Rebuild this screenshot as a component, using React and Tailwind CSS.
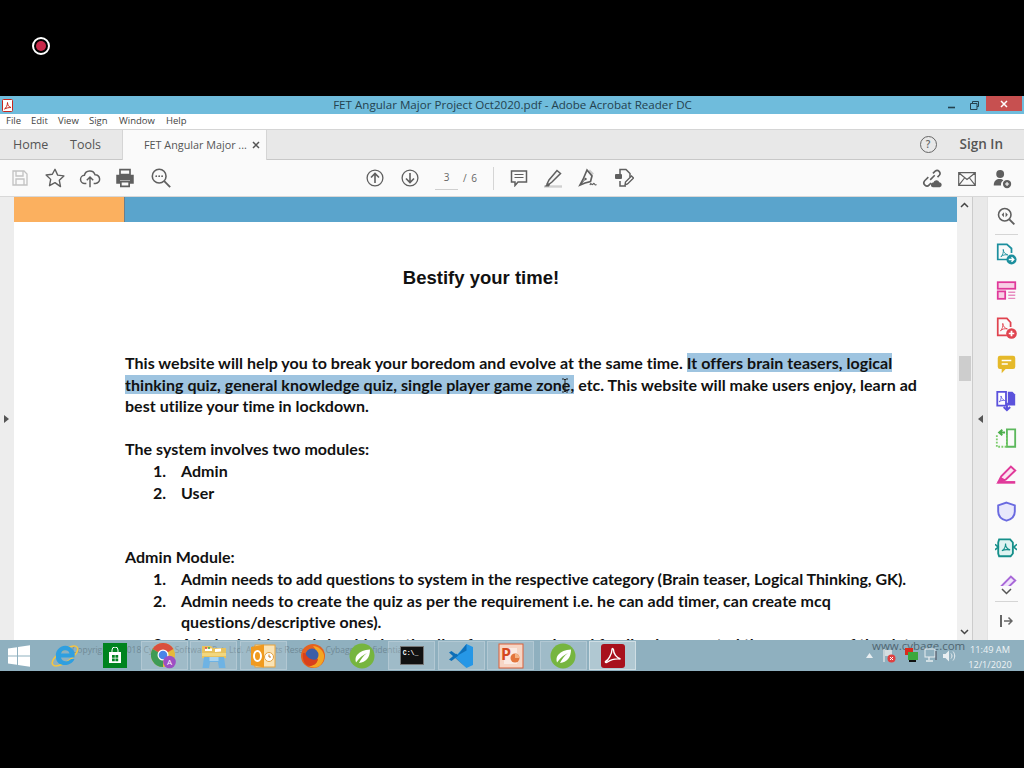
import React from "react";

const ui = { fontFamily: '"Open Sans", "Noto Sans", sans-serif' };
const doc = { fontFamily: 'Lato, "Open Sans", sans-serif' };

function Svg({ s = 22, children, className = "", vb = "0 0 24 24" }) {
  return (
    <svg width={s} height={s} viewBox={vb} fill="none" className={className}>
      {children}
    </svg>
  );
}
const G = "#5f5f5f";

const IconSave = () => (
  <Svg s={18} vb="0 0 18 18"><path d="M2 2h11l3 3v11H2z M5 2v5h7V2 M5 16v-6h8v6" stroke="#c2c2c2" strokeWidth="1.3" /></Svg>
);
const IconStar = () => (
  <Svg s={22}><path d="M12 2.5l2.9 6.4 6.8.8-5 4.8 1.3 6.9L12 17l-6 3.4 1.3-6.9-5-4.8 6.8-.8z" stroke={G} strokeWidth="1.5" strokeLinejoin="round" /></Svg>
);
const IconCloud = () => (
  <Svg s={22}><path d="M8 18H6.5a4.5 4.5 0 0 1-.6-9A6 6 0 0 1 17.5 8.5 4.7 4.7 0 0 1 18 18h-2" stroke={G} strokeWidth="1.6" /><path d="M12 22V11M8.5 14.5 12 11l3.5 3.5" stroke={G} strokeWidth="1.6" /></Svg>
);
const IconPrint = () => (
  <Svg s={20}><path d="M6 2h12v6H6z" stroke={G} strokeWidth="2" /><path d="M1.5 8h21v11H18v-4H6v4H1.5z" fill={G} /><path d="M7 16.5h10V22H7z" stroke={G} strokeWidth="2" /></Svg>
);
const IconFind = () => (
  <Svg s={22}><circle cx="10" cy="10" r="7.5" stroke={G} strokeWidth="1.7" /><path d="M15.5 15.5 22 22" stroke={G} strokeWidth="2" /><circle cx="6.8" cy="10" r="1" fill={G} /><circle cx="10" cy="10" r="1" fill={G} /><circle cx="13.2" cy="10" r="1" fill={G} /></Svg>
);
const IconUp = () => (
  <Svg s={18} vb="0 0 18 18"><circle cx="9" cy="9" r="7.9" stroke={G} strokeWidth="1.3" /><path d="M9 14V4.5M5 8.5l4-4 4 4" stroke={G} strokeWidth="1.6" /></Svg>
);
const IconDown = () => (
  <Svg s={18} vb="0 0 18 18"><circle cx="9" cy="9" r="7.9" stroke={G} strokeWidth="1.3" /><path d="M9 4v9.5M5 9.5l4 4 4-4" stroke={G} strokeWidth="1.6" /></Svg>
);
const IconComment = () => (
  <Svg s={18} vb="0 0 18 18"><path d="M1.5 2h15v11H8l-3 3.5V13H1.5z" stroke={G} strokeWidth="1.5" /><path d="M4.5 5.5h9M4.5 8.5h9" stroke={G} strokeWidth="1.2" /></Svg>
);
const IconHighlight = () => (
  <Svg s={20} vb="0 0 20 20"><path d="M1 18.5h18" stroke="#d0d0d0" strokeWidth="2.4" /><path d="M4 16l2-4L14 2.5 17.5 5.5 9 14l-4 3z" fill="#f4f4f4" stroke={G} strokeWidth="1.5" /><path d="M1.5 18.5 5 15l2 1.5-1 2z" fill={G} /></Svg>
);
const IconSign = () => (
  <Svg s={20} vb="0 0 20 20"><path d="M11 2.500l4 4" stroke="#ccc" strokeWidth="2.500" /><path d="M9 2l5 6-1.500 5.500L7 15l-5 2 3-5.500z" stroke={G} strokeWidth="1.700" /><path d="M2 17l5-5.500" stroke={G} /><circle cx="7.500" cy="11" r="1.200" fill={G} /><path d="M12 17c1-3 1.500 0 2.500-.5s1-2 2-.5 1 1 2 .5" stroke={G} strokeWidth="1.200" /></Svg>
);
const IconForm = () => (
  <Svg s={20} vb="0 0 20 20"><path d="M6 6V1.500h6l4 4V9M6 13v5h6" stroke={G} strokeWidth="1.500" /><rect x="1" y="6" width="7" height="5" rx="1" fill={G} /><path d="M11 17l.5-3 6-6 2 2-6 6z" fill="#fff" stroke={G} strokeWidth="1.400" /></Svg>
);
const IconLink = () => (
  <Svg s={22}><path d="M10 14l5-5M8 11l-4 4a3.200 3.200 0 0 0 5 4.500l2-2M13 7l2.500-2.500a3.200 3.200 0 0 1 4.500 4.500L18 11" stroke={G} strokeWidth="1.700" /><path d="M13 22a2.500 2.500 0 0 1 .5-5 3.500 3.500 0 0 1 6.500-.5 2.800 2.800 0 0 1 .5 5.500z" fill={G} /></Svg>
);
const IconMail = () => (
  <Svg s={18} vb="0 0 18 16"><path d="M.7 1.700h16.600v12.600H.7z M.7 1.700 9 8.500l8.300-6.800M.7 14.300 6.500 7M17.300 14.300 11.500 7" stroke={G} strokeWidth="1.200" /></Svg>
);
const IconUserAdd = () => (
  <Svg s={22}><circle cx="10" cy="6.500" r="4.300" fill={G} /><path d="M3 19c0-5 3-7 6.500-7 2 0 3 .5 4 1.500-2 1-3 3-2.500 5.500z" fill={G} /><circle cx="17.500" cy="17.500" r="4.500" fill={G} /><path d="M15.300 17.500h4.400M17.500 15.300v4.400" stroke="#fff" strokeWidth="1.200" /></Svg>
);

const RightIcons = {
  zoom: (
    <Svg s={20}><circle cx="10.500" cy="10.500" r="7.500" stroke={G} strokeWidth="1.900" /><path d="M16 16l6 6" stroke={G} strokeWidth="2.300" /><path d="M9.500 7.500 6.800 10.500l2.700 3zM11.500 7.500l2.700 3-2.700 3z" fill={G} /></Svg>
  ),
  exportPdf: (
    <Svg s={22}><path d="M14 18H3V1.500h10l5 4.500v5" stroke="#1c8f9e" strokeWidth="1.900" /><path d="M6.500 15c2-2 3-5 2.500-8 0 3 2 5 5 6-3-.5-5.500 0-7.500 2z" stroke="#1c8f9e" strokeWidth="1" /><circle cx="18" cy="18" r="5.500" fill="#1c8f9e" /><path d="M15 18h5.500M18 15.500l2.500 2.500-2.500 2.500" stroke="#fff" strokeWidth="1.500" /></Svg>
  ),
  organize: (
    <Svg s={21}><rect x="2" y="2.500" width="20" height="7.500" stroke="#e0399a" strokeWidth="2" fill="#f8cfe5" /><rect x="2" y="13" width="8.500" height="8.500" stroke="#e0399a" strokeWidth="2" fill="#f8cfe5" /><path d="M14 14h8M14 17.500h8M14 21h8" stroke="#e78bc0" strokeWidth="1.600" /></Svg>
  ),
  create: (
    <Svg s={22}><path d="M13 20H3V1.500h10l4 4.500v5" stroke="#e0434f" strokeWidth="1.900" /><path d="M6 15c2-2 3-5 2.500-8 0 3 2 5 5 6-3-.5-5.500 0-7.500 2z" stroke="#e0434f" strokeWidth="1" /><circle cx="18" cy="18" r="5.800" fill="#e0434f" /><path d="M15 18h6M18 15v6" stroke="#fff" strokeWidth="1.900" /></Svg>
  ),
  comment: (
    <Svg s={21}><path d="M4.500 2h15A2.500 2.500 0 0 1 22 4.500v10a2.500 2.500 0 0 1-2.500 2.500H11l-4.500 5v-5h-2A2.500 2.500 0 0 1 2 14.500v-10A2.500 2.500 0 0 1 4.500 2z" fill="#e5b92a" /><path d="M6.500 7.500h11M6.500 11.500h7" stroke="#fff" strokeWidth="1.800" /></Svg>
  ),
  combine: (
    <Svg s={22}><path d="M12 2H2.500v15H12z" fill="#fff" stroke="#5b52dc" strokeWidth="2" /><path d="M14 2h5l3 3v12h-8z" fill="#5b52dc" /><path d="M4.500 13c2-2 2.500-4 2-6.500.5 2 2 4 4 5-2-.5-4 0-6 1.500z" stroke="#5b52dc" strokeWidth=".9" /><path d="M13 14v7M9.500 18.500 13 22l3.500-3.500" stroke="#5b52dc" strokeWidth="2.200" /></Svg>
  ),
  compress: (
    <Svg s={22}><path d="M13 2.500h9v19h-9z" stroke="#5cb85c" strokeWidth="2" /><path d="M2 9v12.500h11V9" stroke="#7ccc6c" strokeWidth="2" strokeDasharray="2 1.500" /><path d="M11 6H5M8 3 4.500 6 8 9" stroke="#4cae4c" strokeWidth="2.100" /></Svg>
  ),
  fill: (
    <Svg s={21}><path d="M2 21h20" stroke="#e0399a" strokeWidth="3" /><path d="M2.500 21 6 14 17 3l5 4.500L11 18z" fill="#fbe3f0" stroke="#e0399a" strokeWidth="2.200" /><path d="M3 20.500 6 15l5 3z" fill="#e0399a" /></Svg>
  ),
  protect: (
    <Svg s={21}><path d="M12 1.800 21.500 5v7c0 5.500-4 9-9.500 10.500C6.500 21 2.500 17.500 2.500 12V5z" fill="#e8e8fb" stroke="#6a6ae0" strokeWidth="2.200" /></Svg>
  ),
  print: (
    <Svg s={22}><path d="M4.500 2.500h12l3 3.500v12l-2.500 3h-12.500l-1-3V6z" fill="#dff3f1" stroke="#158f8a" strokeWidth="2" /><path d="M7.500 15c2.500-1.500 4-4.500 4-8 0 3.500 2 6 5 7-3.500-.5-6.500-.500-9 1z" stroke="#158f8a" strokeWidth="1.200" /><path d="M0 8l3.500 3L0 14M24 8l-3.500 3L24 14" stroke="#158f8a" strokeWidth="1.700" /></Svg>
  ),
  more: (
    <Svg s={21}><path d="M2 21h20" stroke="#a868d8" strokeWidth="3" /><path d="M2.500 21 6 14 17 3l5 4.500L11 18z" fill="#f0e3fb" stroke="#a868d8" strokeWidth="2.200" /></Svg>
  ),
};

function Toolbar() {
  return (
    <div className="relative flex h-[37px] items-center border-b border-[#d8d8d8] bg-[#fafafa]">
      <div className="ml-[10px] flex w-[19px] justify-center"><IconSave /></div>
      <div className="ml-[15px] flex w-[22px] justify-center"><IconStar /></div>
      <div className="ml-[13px] flex w-[22px] justify-center"><IconCloud /></div>
      <div className="ml-[13px] flex w-[22px] justify-center"><IconPrint /></div>
      <div className="ml-[14px] flex w-[22px] justify-center"><IconFind /></div>
      <div className="ml-[194px] flex w-[18px] justify-center"><IconUp /></div>
      <div className="ml-[17px] flex w-[18px] justify-center"><IconDown /></div>
      <div className="ml-[16px] flex h-[23px] w-[23px] items-center justify-center border-b border-[#cfcfcf] text-[10px] text-[#666]" style={ui}>3</div>
      <div className="ml-[5px] text-[10px] tracking-[1px] text-[#666]" style={ui}>/ 6</div>
      <div className="ml-[15px] h-[23px] w-px bg-[#d5d5d5]" />
      <div className="ml-[16px] flex w-[18px] justify-center"><IconComment /></div>
      <div className="ml-[15px] flex w-[20px] justify-center"><IconHighlight /></div>
      <div className="ml-[15px] flex w-[20px] justify-center"><IconSign /></div>
      <div className="ml-[16px] flex w-[20px] justify-center"><IconForm /></div>
      <div className="ml-auto mr-[81px] flex w-[22px] justify-center"><IconLink /></div>
      <div className="absolute right-[48px] top-[10px]"><IconMail /></div>
      <div className="absolute right-[11px] top-[8px]"><IconUserAdd /></div>
    </div>
  );
}

function Page() {
  const line = "whitespace-nowrap";
  return (
    <div className="h-[443px] w-[943px] overflow-hidden bg-white" style={doc}>
      <div className="flex h-[25px]">
        <div className="w-[110px] bg-[#fbb05f]" />
        <div className="w-px bg-[#6b7f8c]" />
        <div className="flex-1 bg-[#5aa4cc]" />
      </div>
      <h1 className="mt-[45px] w-[934px] text-center text-[18.500px] font-bold leading-[22px] text-[#111]" style={{ fontFamily: '"Liberation Sans", sans-serif' }}>
        Bestify your time!
      </h1>
      <div className="ml-[111px] mt-[63px] text-[16px] font-bold leading-[21.600px] tracking-[0.04px] text-[#111]">
        <p className={line}>
          This website will help you to break your boredom and evolve at the same time.{" "}
          <span className="bg-[#9ec4e0]">It offers brain teasers, logical</span>
        </p>
        <p className={line}>
          <span className="bg-[#9ec4e0]">thinking quiz, general knowledge quiz, single player game zone,</span> etc. This website will make users enjoy, learn ad
        </p>
        <p className={line}>best utilize your time in lockdown.</p>
        <p className="h-[21.600px]" />
        <p className={line}>The system involves two modules:</p>
        <ol>
          {["Admin", "User"].map((t, i) => (
            <li key={t} className="flex">
              <span className="ml-[28px] w-[28px]">{i + 1}.</span>
              <span>{t}</span>
            </li>
          ))}
        </ol>
        <p className="h-[43.200px]" />
        <p className={line}>Admin Module:</p>
        <ol>
          <li className="flex whitespace-nowrap">
            <span className="ml-[28px] w-[28px]">1.</span>
            <span className="tracking-[-0.03px]">Admin needs to add questions to system in the respective category (Brain teaser, Logical Thinking, GK).</span>
          </li>
          <li className="flex">
            <span className="ml-[28px] w-[28px]">2.</span>
            <span className="w-[680px]">Admin needs to create the quiz as per the requirement i.e. he can add timer, can create mcq questions/descriptive ones).</span>
          </li>
          <li className="flex whitespace-nowrap">
            <span className="ml-[28px] w-[28px]">3.</span>
            <span>Admin decides and should give timeline for every quiz and feedback generated the summary of the data</span>
          </li>
        </ol>
      </div>
    </div>
  );
}

function Scrollbar() {
  return (
    <div className="flex h-[443px] w-[16px] flex-col items-center border-r border-[#cccccc] bg-[#f0f0f0]">
      <svg width="9" height="6" viewBox="0 0 9 6" className="mt-[5px]"><path d="M1 5l3.500-3.500L8 5" stroke="#444" strokeWidth="1.500" fill="none" /></svg>
      <div className="mt-[148px] h-[25px] w-[12px] bg-[#cdcdcd]" />
      <svg width="9" height="6" viewBox="0 0 9 6" className="mt-auto mb-[5px]"><path d="M1 1l3.500 3.500L8 1" stroke="#444" strokeWidth="1.500" fill="none" /></svg>
    </div>
  );
}

function RightPanel() {
  const k = RightIcons;
  const rows = [k.exportPdf, k.organize, k.create, k.comment, k.combine, k.compress, k.fill, k.protect, k.print, k.more];
  return (
    <div className="relative flex h-[443px] flex-1 flex-col items-center overflow-hidden border-l border-[#e2e2e2] bg-[#fafafa]">
      <div className="mt-[9px] flex h-[20px] items-center">{k.zoom}</div>
      <div className="mt-[8px] h-px w-[23px] bg-[#d5d5d5]" />
      <div className="mt-[9px] flex flex-col items-center gap-[16.750px]">
        {rows.map((r, i) => (
          <div key={i} className="flex h-[20px] items-center">{r}</div>
        ))}
      </div>
      <div className="absolute bottom-0 left-0 flex h-[54px] w-full flex-col items-center bg-[#fafafa]">
        <svg width="11" height="7" viewBox="0 0 11 7" className="mt-[2px]"><path d="M1 1l4.500 4.500L10 1" stroke="#555" strokeWidth="1.500" fill="none" /></svg>
        <div className="mt-[6px] h-px w-[23px] bg-[#d5d5d5]" />
        <svg width="14" height="14" viewBox="0 0 14 14" className="mt-[12px]"><path d="M2 1v12" stroke="#666" strokeWidth="2" /><path d="M5 7h8M9.500 3.500 13 7l-3.500 3.500" stroke="#666" strokeWidth="1.500" fill="none" /></svg>
      </div>
    </div>
  );
}

const TaskIcons = {
  ie: (
    <svg width="34" height="32" viewBox="0 0 34 32"><ellipse cx="17" cy="16" rx="15" ry="6" transform="rotate(-35 17 16)" fill="none" stroke="#f4c542" strokeWidth="1.600" /><path d="M8 17.500a9.500 9.500 0 1 1 18.500 0H13c.5 4 6 5.500 10 1.500h3.500C23 27.500 8 27 8 17.500zM13 13.500h8.500c-.5-4.500-7.500-4.500-8.500 0z" fill="#2f9fe0" /></svg>
  ),
  store: (
    <div className="flex h-[25px] w-[24px] items-center justify-center bg-[#00831f]">
      <svg width="14" height="17" viewBox="0 0 14 17"><path d="M4 5V3a3 3 0 0 1 6 0v2" stroke="#fff" fill="none" /><path d="M1 5h12v11H1z" fill="#fff" /><path d="M4 8h2.800v2.800H4zM7.400 8h2.800v2.800H7.400zM4 11.400h2.800v2.800H4zM7.400 11.400h2.800v2.800H7.400z" fill="#00831f" /></svg>
    </div>
  ),
  chrome: (
    <svg width="26" height="26" viewBox="0 0 26 26"><circle cx="12" cy="12" r="12" fill="#e6b93a" /><path d="M12 12 1.600 6A12 12 0 0 1 22.400 6z" fill="#d9503f" /><path d="M12 12 1.600 6A12 12 0 0 0 12 24z" fill="#3f9b55" /><circle cx="12" cy="12" r="5.500" fill="#fff" /><circle cx="12" cy="12" r="4.300" fill="#4a84e8" /><circle cx="18.500" cy="19" r="6.300" fill="#9d4fc4" /><text x="18.500" y="22" textAnchor="middle" fontSize="8" fill="#fff" fontFamily="Open Sans">A</text></svg>
  ),
  folder: (
    <svg width="26" height="26" viewBox="0 0 26 26"><path d="M1 3h9l2 2h13v10H1z" fill="#e8c25e" /><path d="M4 5.500h7v2.500H4zM14 6l6-.5v3l-6 .5z" fill="#fff" /><circle cx="5" cy="5" r="1" fill="#d44" /><circle cx="8" cy="5" r="1" fill="#4a4" /><path d="M1 10h24v3H1z" fill="#f2d77f" /><path d="M3 14h20l1.500 11H18l-1-6H9l-1 6H1.500z" fill="#6eb3e4" /><path d="M8.500 14h9v4h-9z" fill="#a9d4f0" /></svg>
  ),
  outlook: (
    <svg width="26" height="26" viewBox="0 0 26 26"><rect x="5" y="2" width="20" height="22" fill="#fae3b5" stroke="#e7a33c" /><path d="M1 4 14 1.500v23L1 22z" fill="#f09a1f" /><ellipse cx="7.500" cy="13" rx="3.500" ry="5" fill="none" stroke="#fff" strokeWidth="2" /><circle cx="19" cy="14" r="4.500" fill="#fff" stroke="#e0a040" /><path d="M19 11.500V14h2" stroke="#c77a20" fill="none" /></svg>
  ),
  firefox: (
    <svg width="26" height="26" viewBox="0 0 26 26"><circle cx="13" cy="13" r="12" fill="#e4611f" /><path d="M13 3c5 0 10 4 11 9 .5 6-3 12-9 12.500-3 .3-6-1-7.500-3 3 1 7 .500 9-2 2-3 1-6-1-8-1 1-3 1-4 0 1-1 1-3 1-4 1 1 3 1 3-1 0-1-1.500-2-2.500-3.500z" fill="#f5a623" /><circle cx="12" cy="12" r="6.500" fill="#3b5ea8" /><path d="M5 10c3 6 7 8 13 6-1 5-5 7-8 7C5 23 2 17 3 10z" fill="#d8401c" /></svg>
  ),
  spring: (
    <svg width="26" height="26" viewBox="0 0 26 26"><circle cx="13" cy="13" r="12.500" fill="#76b53f" /><path d="M7 19.500c-2-6 2-12 14-13 0 8-4 13-11 13.500 2-4 4-7 8-10-4 2-8 5-11 9.500z" fill="#fff" /></svg>
  ),
  cmd: (
    <div className="flex h-[19px] w-[24px] flex-col border border-[#777] bg-[#111] px-[2px] text-[6.500px] font-bold leading-[9px] text-white" style={{ fontFamily: '"Liberation Mono", monospace' }}>
      <span className="mt-[2px]">C:\_</span>
    </div>
  ),
  vscode: (
    <svg width="26" height="26" viewBox="0 0 26 26"><path d="M18.500 1 25 4v18l-6.500 3L7 14z" fill="#2697e6" /><path d="M18.500 1v6.500L7 14l11.500 11-4-3.500L1 9.500 3.500 8l6 4.500z" fill="#0f6fb8" /><path d="M1 16.500 3.500 18l7-5.500-2.500-2z" fill="#0f6fb8" /></svg>
  ),
  ppt: (
    <svg width="26" height="26" viewBox="0 0 26 26"><rect x="1" y="1" width="24" height="24" fill="#f7d5c4" stroke="#d9603a" /><path d="M6 5h13v16H6z" fill="#fff" opacity=".5" /><text x="3" y="17" fontSize="16" fontWeight="700" fill="#d5491f" fontFamily="Open Sans">P</text><circle cx="17" cy="15" r="4.500" fill="#e3753c" /><path d="M17 15V10.500a4.500 4.500 0 0 1 4.500 4.500z" fill="#f4b183" /></svg>
  ),
  acrobat: (
    <div className="flex h-[24px] w-[24px] items-center justify-center rounded-[3px] bg-[#a8111c]">
      <svg width="18" height="17" viewBox="0 0 18 17"><path d="M1.500 14.500C4 13.500 8 7 8 2.500c0-1.500 1.500-1 1.500.3 0 4 3 8 7 9.200-5-.5-9.500.5-13 3-1.500 1-2.500 0-2-.5z" fill="none" stroke="#fff" strokeWidth="1.400" /></svg>
    </div>
  ),
};

function TaskItem({ children, running, active, className = "" }) {
  return (
    <div className={`flex h-[31px] w-[49.500px] items-center justify-center py-[1px] ${className}`}>
      <div className={`flex h-[29px] w-[47px] items-center justify-center ${running ? (active ? "border border-white/40 bg-white/30" : "border border-white/20 bg-white/15") : ""}`}>
        {children}
      </div>
    </div>
  );
}

function Taskbar() {
  const t = TaskIcons;
  return (
    <div className="relative flex h-[31px] bg-[#8fb0bf]">
      <div className="absolute left-[72px] top-[4px] whitespace-nowrap text-[8.500px] text-[#6f8a96]" style={ui}>
        Copyright © 2018 Cybage Software Pvt. Ltd. All Rights Reserved. Cybage Confidential.
      </div>
      <div className="absolute left-[872px] top-[-3px] whitespace-nowrap text-[11.500px] text-[#4f6672]" style={ui}>www.cybage.com</div>

      <div className="relative flex w-[40.500px] items-center justify-center pr-[3px]">
        <svg width="22" height="22" viewBox="0 0 22 22"><path d="M0 3.500 9 2.200v8.200H0zM10 2 22 .3v10.100H10zM0 11.500h9v8.300L0 18.500zM10 11.500h12V21.700L10 20z" fill="#fff" /></svg>
      </div>
      <div className="relative flex">
        <TaskItem>{t.ie}</TaskItem>
        <TaskItem>{t.store}</TaskItem>
        <TaskItem running>{t.chrome}</TaskItem>
        <TaskItem running>{t.folder}</TaskItem>
        <TaskItem running>{t.outlook}</TaskItem>
        <TaskItem>{t.firefox}</TaskItem>
        <TaskItem>{t.spring}</TaskItem>
        <TaskItem running>{t.cmd}</TaskItem>
        <TaskItem running>{t.vscode}</TaskItem>
        <TaskItem running>{t.ppt}</TaskItem>
        <TaskItem running className="ml-[3px]">{t.spring}</TaskItem>
        <TaskItem running active>{t.acrobat}</TaskItem>
      </div>
      <div className="relative ml-auto flex items-center" style={ui}>
        <svg width="7" height="5" viewBox="0 0 7 5" className="mr-[9px]"><path d="M0 5 3.500 0 7 5z" fill="#e8eef1" /></svg>
        <svg width="14" height="15" viewBox="0 0 14 15" className="mr-[8px]"><path d="M2 1v13" stroke="#e5e5e5" strokeWidth="1.300" /><path d="M3 2h7v6H3z" fill="#d5dde0" /><circle cx="9.500" cy="10.500" r="4" fill="#e04040" /><path d="M8 9l3 3M11 9l-3 3" stroke="#fff" /></svg>
        <svg width="15" height="15" viewBox="0 0 15 15" className="mr-[5px]"><rect x="1" y="0" width="8" height="7" fill="#dc2a1c" /><rect x="4" y="4" width="10" height="8" fill="#3ca83c" /><rect x="5" y="12" width="7" height="2" fill="#111" /></svg>
        <svg width="14" height="15" viewBox="0 0 14 15" className="mr-[5px]"><rect x="1" y="1" width="10" height="8" fill="#8fb0bf" stroke="#e8eef1" /><path d="M5 9v3M2 13h7" stroke="#e8eef1" strokeWidth="1.300" /><path d="M12 3v9" stroke="#445" /></svg>
        <svg width="13" height="14" viewBox="0 0 13 14" className="mr-[12px]"><path d="M0 5h2.500L6 1.500v11L2.500 9H0z" fill="#e8eef1" /><path d="M8 4.500c1.300 1.500 1.300 3.500 0 5M10 2.500c2.300 2.700 2.300 6.300 0 9" stroke="#e8eef1" fill="none" /></svg>
        <div className="mr-[12px] mt-[2px] w-[44px] whitespace-nowrap text-center text-[9.200px] leading-[15px] text-[#eef3f5]">
          <div>11:49 AM</div>
          <div>12/1/2020</div>
        </div>
      </div>
    </div>
  );
}

export default function App() {
  return (
    <div className="flex h-[768px] w-[1024px] flex-col overflow-hidden bg-black">
      <div className="h-[96px] pl-[32px] pt-[37px]">
        <div className="flex h-[18px] w-[18px] items-center justify-center rounded-full border-2 border-white bg-black">
          <div className="h-[10px] w-[10px] rounded-full bg-[#c8294a]" />
        </div>
      </div>

      <div className="relative flex h-[18px] items-center bg-[#6fbcdc]">
        <svg width="12" height="13" viewBox="0 0 12 13" className="ml-[2px]"><rect x=".5" y=".5" width="10" height="12" rx="1" fill="#fff" stroke="#c8281e" /><path d="M2.500 10C4 9 5.500 6.500 5.500 3.500 5.500 6 7 8 9 8.500 6.500 8.500 4.500 9 2.500 10z" fill="none" stroke="#c8281e" /></svg>
        <div className="absolute left-0 top-0 w-full pl-[1px] text-center text-[11.600px] leading-[18px] text-[#24424f]" style={ui}>
          FET Angular Major Project Oct2020.pdf - Adobe Acrobat Reader DC
        </div>
        <div className="relative ml-auto flex h-[18px] items-center">
          <svg width="8" height="8" viewBox="0 0 8 8" className="mr-[14px]"><path d="M0 6.500h7" stroke="#24424f" strokeWidth="1.600" /></svg>
          <svg width="9" height="9" viewBox="0 0 9 9" className="mr-[7px]"><path d="M2.500 2.500V.5h6v5H7M.5 2.500h6.500v6H.5z" stroke="#24424f" fill="none" /></svg>
          <div className="flex h-[15px] w-[36px] items-center justify-center self-start bg-[#c75050]">
            <svg width="8" height="8" viewBox="0 0 8 8"><path d="M1 1l6 6M7 1 1 7" stroke="#fff" strokeWidth="1.500" /></svg>
          </div>
          <div className="w-[2px]" />
        </div>
      </div>

      <div className="flex h-[16px] items-center border-b border-[#d5d5d5] bg-white pl-[6px] text-[9.500px] text-[#444]" style={ui}>
        <span className="w-[25px]">File</span>
        <span className="w-[27px]">Edit</span>
        <span className="w-[31px]">View</span>
        <span className="w-[30px]">Sign</span>
        <span className="w-[47px]">Window</span>
        <span>Help</span>
      </div>

      <div className="flex h-[30px] items-stretch border-b border-[#c8c8c8] bg-[#e8e8e8]" style={ui}>
        <div className="flex w-[122px] items-center pl-[13px] pt-[2px] text-[12.500px] text-[#555]">
          <span className="w-[57px]">Home</span>
          <span>Tools</span>
        </div>
        <div className="mb-[-1px] flex w-[145px] items-center border-x border-[#d5d5d5] bg-[#fafafa] pl-[21px] text-[10.800px] text-[#555]">
          <span className="w-[108px] whitespace-nowrap">FET Angular Major ...</span>
          <svg width="8" height="8" viewBox="0 0 8 8"><path d="M1 1l6 6M7 1 1 7" stroke="#555" strokeWidth="1.500" /></svg>
        </div>
        <div className="ml-auto mr-[21px] flex items-center">
          <div className="mr-[23px] flex h-[17px] w-[17px] items-center justify-center rounded-full border border-[#666] text-[10px] font-semibold text-[#666]">?</div>
          <span className="text-[13.500px] font-semibold text-[#555]">Sign In</span>
        </div>
      </div>

      <Toolbar />

      <div className="flex h-[443px]">
        <div className="flex w-[14px] items-center bg-[#ededed] pl-[4px]">
          <svg width="5" height="8" viewBox="0 0 5 8"><path d="M0 0l5 4-5 4z" fill="#555" /></svg>
        </div>
        <Page />
        <Scrollbar />
        <div className="flex w-[14px] items-center justify-center bg-[#e9e9e9]">
          <svg width="5" height="8" viewBox="0 0 5 8"><path d="M5 0 0 4l5 4z" fill="#555" /></svg>
        </div>
        <RightPanel />
      </div>

      <Taskbar />

      <div className="pointer-events-none absolute left-[561px] top-[378px]">
        <svg width="8" height="15" viewBox="0 0 8 15"><path d="M1 1h2l1 1 1-1h2M4 2v11M1 14h2l1-1 1 1h2" stroke="#222" fill="none" /></svg>
      </div>
    </div>
  );
}
